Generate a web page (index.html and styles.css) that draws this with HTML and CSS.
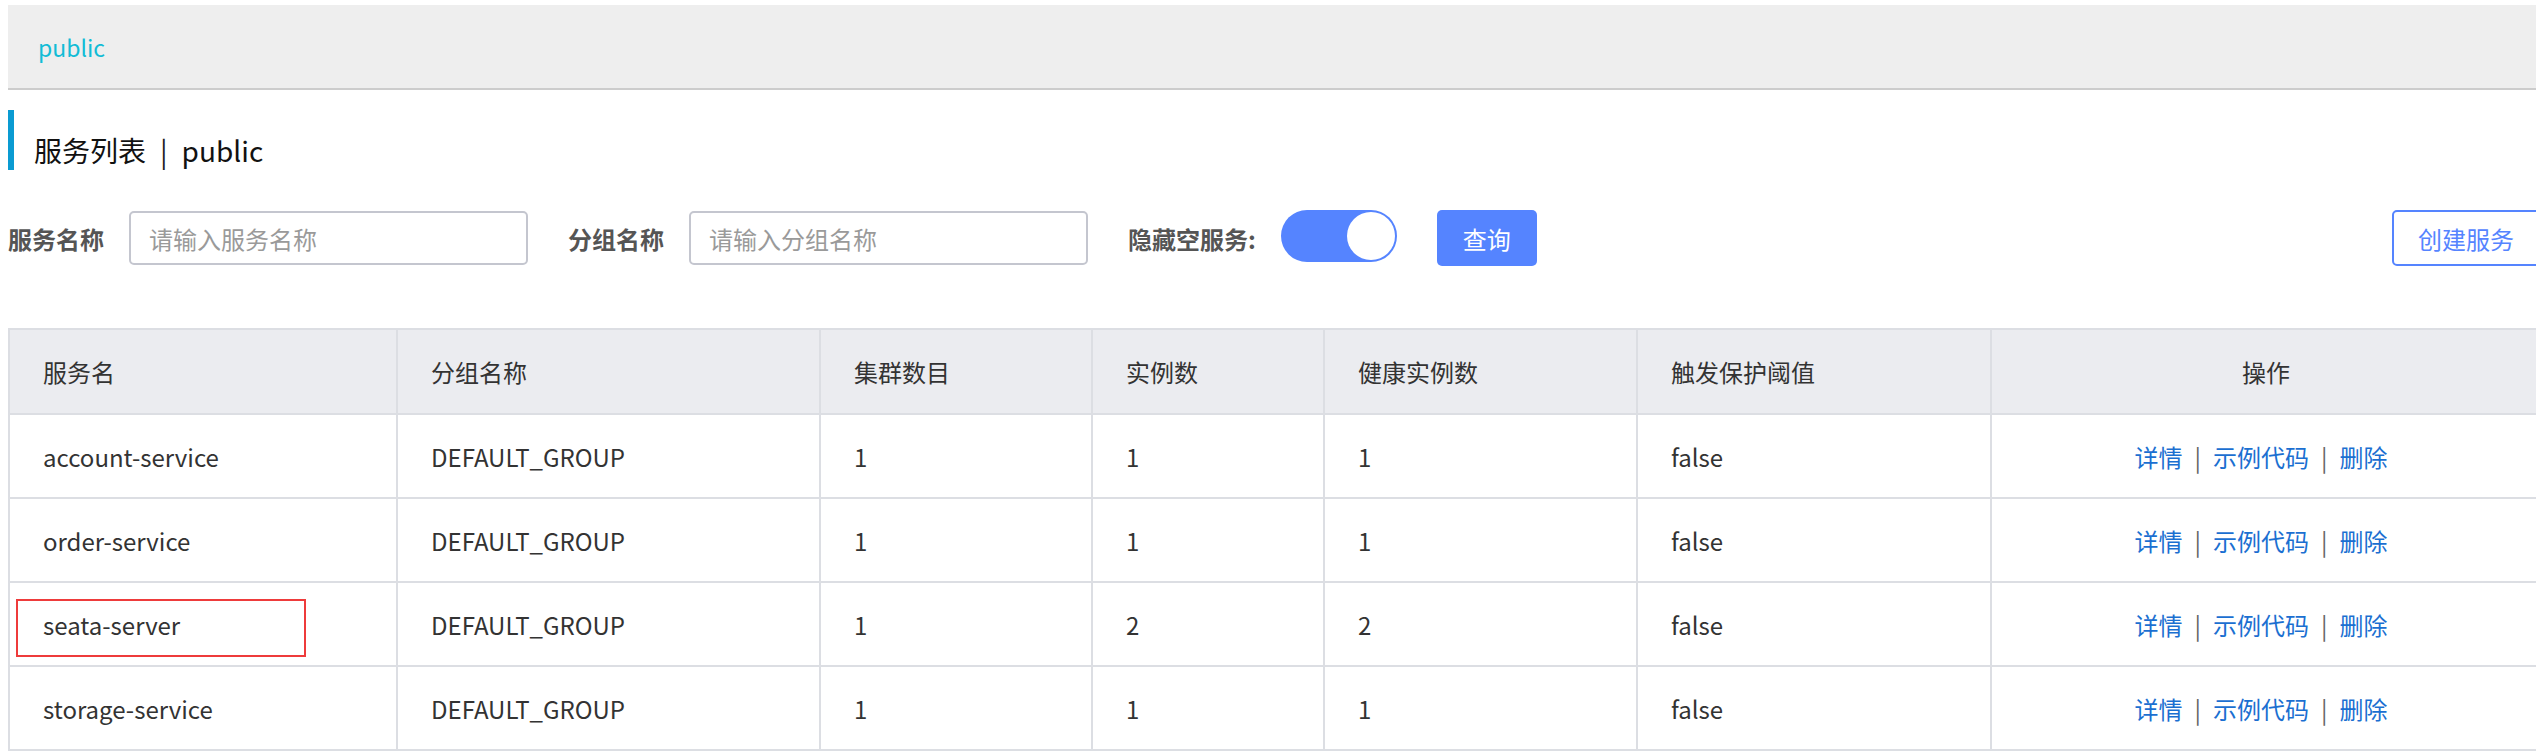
FILE: index.html
```html
<!DOCTYPE html>
<html lang="zh-CN">
<head>
<meta charset="utf-8">
<title>服务列表</title>
<link rel="stylesheet" href="styles.css">
</head>
<body>
<div class="page">
  <div class="topbar"><span class="topbar-ns">public</span></div>

  <div class="title"><span>服务列表</span><span class="title-sep">|</span><span>public</span></div>

  <div class="filters">
    <label class="flabel">服务名称</label>
    <input class="finput" type="text" placeholder="请输入服务名称">
    <label class="flabel">分组名称</label>
    <input class="finput" type="text" placeholder="请输入分组名称">
    <label class="flabel flabel-toggle">隐藏空服务:</label>
    <div class="toggle"><span class="toggle-knob"></span></div>
    <button class="btn-primary">查询</button>
    <button class="btn-outline">创建服务</button>
  </div>

  <table class="svc-table">
    <colgroup>
      <col class="c1"><col class="c2"><col class="c3"><col class="c4"><col class="c5"><col class="c6"><col class="c7">
    </colgroup>
    <thead>
      <tr>
        <th>服务名</th><th>分组名称</th><th>集群数目</th><th>实例数</th><th>健康实例数</th><th>触发保护阈值</th><th class="ops">操作</th>
      </tr>
    </thead>
    <tbody>
      <tr>
        <td>account-service</td><td>DEFAULT_GROUP</td><td>1</td><td>1</td><td>1</td><td>false</td>
        <td class="ops"><a>详情</a><span class="sep">|</span><a>示例代码</a><span class="sep">|</span><a>删除</a></td>
      </tr>
      <tr>
        <td>order-service</td><td>DEFAULT_GROUP</td><td>1</td><td>1</td><td>1</td><td>false</td>
        <td class="ops"><a>详情</a><span class="sep">|</span><a>示例代码</a><span class="sep">|</span><a>删除</a></td>
      </tr>
      <tr>
        <td class="marked">seata-server<span class="mark"></span></td><td>DEFAULT_GROUP</td><td>1</td><td>2</td><td>2</td><td>false</td>
        <td class="ops"><a>详情</a><span class="sep">|</span><a>示例代码</a><span class="sep">|</span><a>删除</a></td>
      </tr>
      <tr>
        <td>storage-service</td><td>DEFAULT_GROUP</td><td>1</td><td>1</td><td>1</td><td>false</td>
        <td class="ops"><a>详情</a><span class="sep">|</span><a>示例代码</a><span class="sep">|</span><a>删除</a></td>
      </tr>
    </tbody>
  </table>
</div>
</body>
</html>
```
FILE: styles.css
```css
html, body {
  margin: 0;
  padding: 0;
  background: #fff;
  overflow: hidden;
}
body {
  font-family: "Noto Sans CJK SC", "Noto Sans", sans-serif;
  color: #333;
}
.page {
  width: 2532px;
  margin-left: 8px;
  padding-top: 5px;
}
.topbar {
  height: 83px;
  background: #eeeeee;
  border-bottom: 2px solid #cccccc;
  display: flex;
  align-items: center;
  padding-left: 30px;
}
.topbar-ns {
  color: #12bcd6;
  font-size: 23px;
}
.title {
  margin-top: 20px;
  height: 60px;
  box-sizing: border-box;
  border-left: 6px solid #0a9bd2;
  padding-left: 20px;
  padding-top: 20px;
  display: flex;
  align-items: center;
  font-size: 28px;
  color: #111;
}
.title-sep {
  margin: 0 14px;
  color: #222;
}
.filters {
  display: flex;
  align-items: center;
  margin-top: 40px;
  height: 56px;
}
.flabel {
  font-size: 24px;
  font-weight: bold;
  color: #555;
  margin-right: 25px;
}
.finput {
  width: 399px;
  height: 54px;
  box-sizing: border-box;
  border: 2px solid #c4c6cf;
  border-radius: 5px;
  padding: 0 0 0 18px;
  font-size: 24px;
  font-family: inherit;
  color: #333;
  margin-right: 40px;
  outline: none;
}
.finput::placeholder {
  color: #9a9a9a;
}
.toggle {
  width: 116px;
  height: 52px;
  box-sizing: border-box;
  border-radius: 26px;
  background: #5584ff;
  padding: 2px;
  display: flex;
  justify-content: flex-end;
  align-items: center;
  margin-right: 40px;
  margin-top: -4px;
}
.toggle-knob {
  width: 48px;
  height: 48px;
  border-radius: 50%;
  background: #fff;
}
.btn-primary {
  width: 100px;
  height: 56px;
  border: none;
  border-radius: 5px;
  background: #5584ff;
  color: #fff;
  font-size: 24px;
  font-family: inherit;
  padding: 0;
}
.btn-outline {
  margin-left: auto;
  height: 56px;
  border: 2px solid #5584ff;
  border-radius: 5px;
  background: #fff;
  color: #5584ff;
  font-size: 24px;
  font-family: inherit;
  padding: 0 24px;
}
.svc-table {
  width: 2532px;
  table-layout: fixed;
  border-collapse: collapse;
  margin-top: 62px;
  font-size: 24px;
  color: #333;
}
.c1 { width: 388px; }
.c2 { width: 423px; }
.c3 { width: 272px; }
.c4 { width: 232px; }
.c5 { width: 313px; }
.c6 { width: 354px; }
.c7 { width: 550px; }
.svc-table th,
.svc-table td {
  border: 2px solid #dcdee3;
  padding: 0 0 0 33px;
  text-align: left;
  font-weight: normal;
  vertical-align: middle;
}
.svc-table th {
  background: #ebecf0;
  height: 83px;
}
.svc-table td {
  height: 82px;
}
.svc-table th.ops {
  text-align: center;
  padding: 0;
}
.svc-table td.ops {
  text-align: center;
  padding: 0 10px 0 0;
}
.ops a {
  color: #1b6fd1;
}
.ops .sep {
  margin: 0 12px;
  color: #666;
}
.marked {
  position: relative;
}
.mark {
  position: absolute;
  left: 6px;
  top: 16px;
  width: 290px;
  height: 58px;
  box-sizing: border-box;
  border: 2px solid #ee3b3b;
}
```
